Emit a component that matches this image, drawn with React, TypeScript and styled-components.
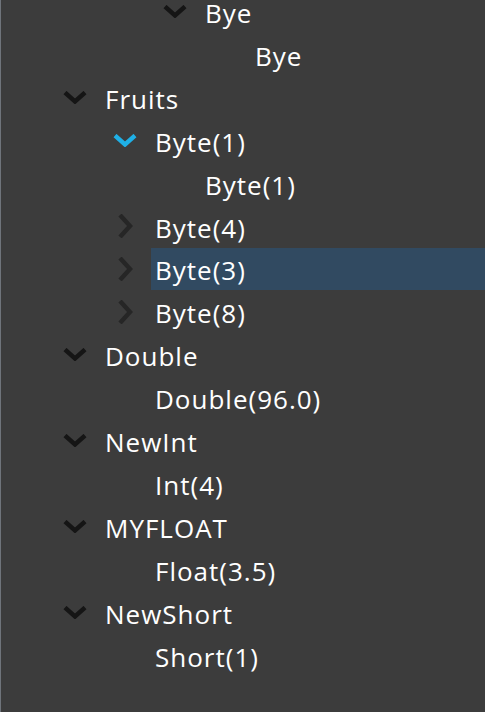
import React from "react";
import styled, { createGlobalStyle } from "styled-components";

const Global = createGlobalStyle`
  html, body { margin: 0; padding: 0; background: #3c3c3c; }
  body { font-family: "Open Sans", "Noto Sans", sans-serif; }
`;

type Node = {
  label: string;
  expanded?: boolean;
  selected?: boolean;
  hover?: boolean;
  children?: Node[];
};

const partial: { depth: number; node: Node }[] = [
  { depth: 2, node: { label: "Bye", expanded: true, children: [{ label: "Bye" }] } },
];

const roots: Node[] = [
  {
    label: "Fruits",
    expanded: true,
    children: [
      { label: "Byte(1)", expanded: true, hover: true, children: [{ label: "Byte(1)" }] },
      { label: "Byte(4)", children: [{ label: "x" }] },
      { label: "Byte(3)", selected: true, children: [{ label: "x" }] },
      { label: "Byte(8)", children: [{ label: "x" }] },
    ],
  },
  { label: "Double", expanded: true, children: [{ label: "Double(96.0)" }] },
  { label: "NewInt", expanded: true, children: [{ label: "Int(4)" }] },
  { label: "MYFLOAT", expanded: true, children: [{ label: "Float(3.5)" }] },
  { label: "NewShort", expanded: true, children: [{ label: "Short(1)" }] },
];

const Viewport = styled.div`
  width: 485px;
  height: 712px;
  overflow: hidden;
  background: #3c3c3c;
  border-left: 1px solid #6f747b;
  box-sizing: border-box;
`;

const List = styled.div`
  display: flex;
  flex-direction: column;
  margin-top: -10px;
`;

const Row = styled.div<{ $depth: number }>`
  display: flex;
  align-items: stretch;
  height: 42.93px;
  padding-left: ${(p) => 62 + p.$depth * 50}px;
`;

const Expander = styled.div`
  width: 38px;
  flex: 0 0 38px;
  display: flex;
  align-items: center;
`;

const Label = styled.div<{ $selected?: boolean }>`
  flex: 1;
  display: flex;
  align-items: center;
  padding: 3px 0 0 4px;
  color: #ffffff;
  font-size: 26px;
  letter-spacing: 1px;
  white-space: nowrap;
  background: ${(p) => (p.$selected ? "#314a61" : "transparent")};
`;

const DownChevron = ({ color }: { color: string }) => (
  <svg width="24" height="13" viewBox="0 0 24 13">
    <path d="M2 1.5 L12 10.5 L22 1.5" fill="none" stroke={color} strokeWidth="4.4" />
  </svg>
);

const RightChevron = ({ color }: { color: string }) => (
  <svg width="24" height="24" viewBox="0 0 24 24">
    <path d="M7 1 L17 12 L7 23" fill="none" stroke={color} strokeWidth="4.4" />
  </svg>
);

function renderNode(node: Node, depth: number, out: React.ReactNode[], key: string) {
  const hasKids = !!node.children;
  out.push(
    <Row key={key} $depth={depth}>
      <Expander>
        {hasKids &&
          (node.expanded ? (
            <DownChevron color={node.hover ? "#1fb0e6" : "#151515"} />
          ) : (
            <RightChevron color="#262626" />
          ))}
      </Expander>
      <Label $selected={node.selected}>{node.label}</Label>
    </Row>
  );
  if (hasKids && node.expanded) {
    node.children!.forEach((c, i) => renderNode(c, depth + 1, out, key + "-" + i));
  }
}

export default function App() {
  const rows: React.ReactNode[] = [];
  partial.forEach((d, i) => renderNode(d.node, d.depth, rows, "a" + i));
  roots.forEach((n, i) => renderNode(n, 0, rows, "r" + i));
  return (
    <>
      <Global />
      <Viewport>
        <List>{rows}</List>
      </Viewport>
    </>
  );
}
